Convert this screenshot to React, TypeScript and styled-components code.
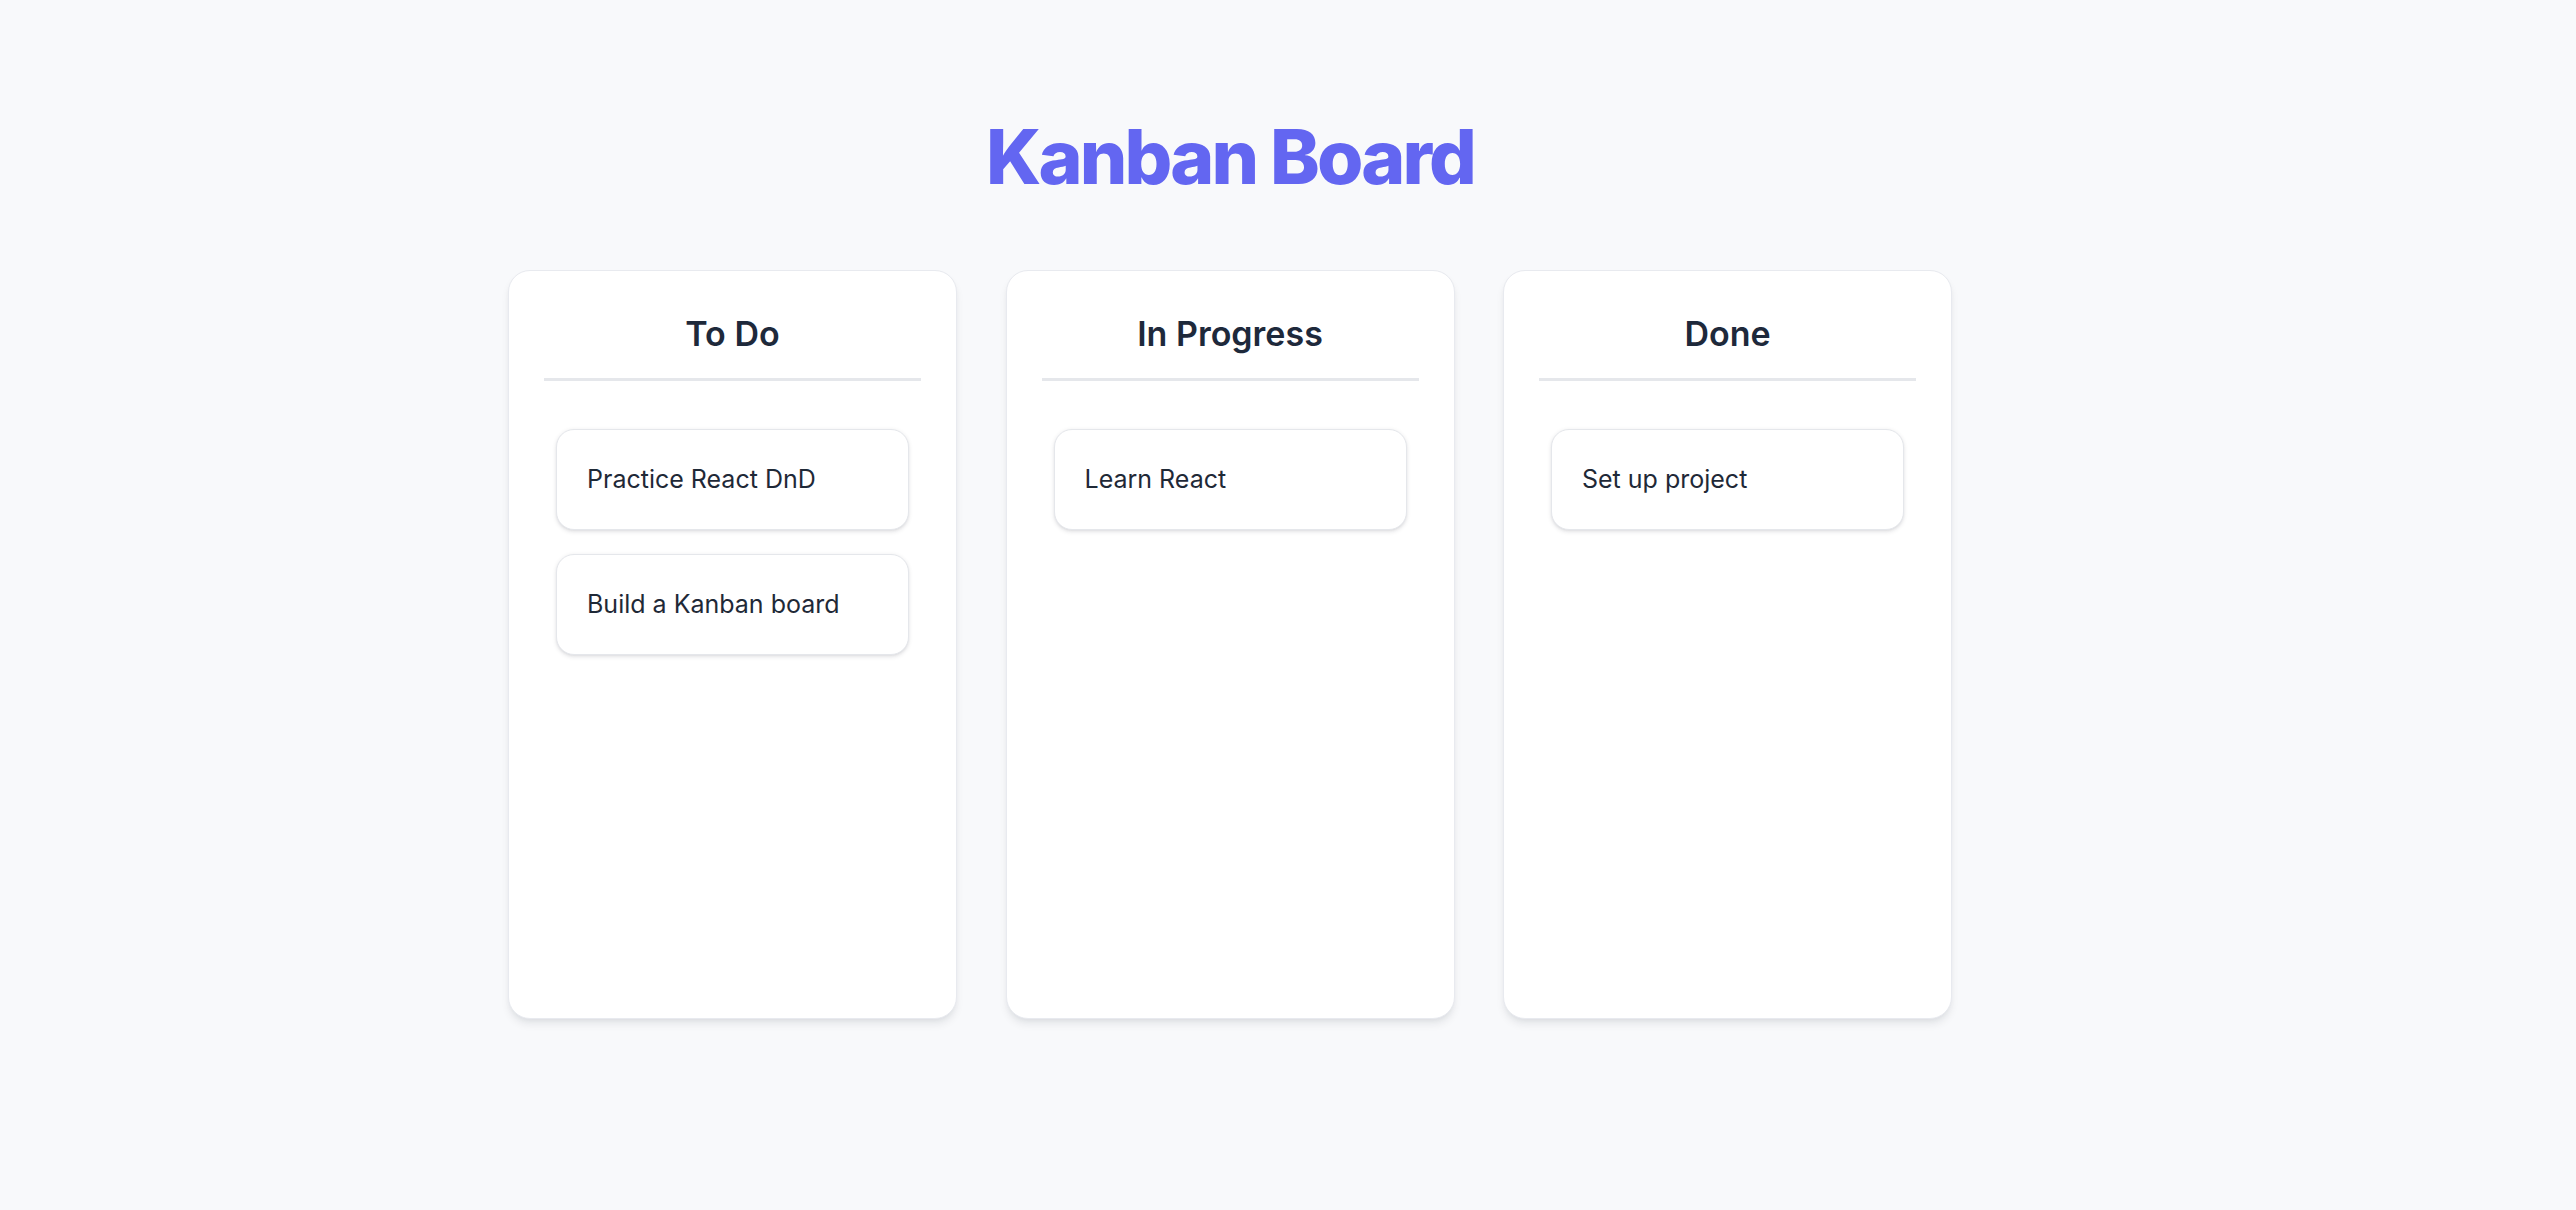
import React from 'react';
import styled, { createGlobalStyle } from 'styled-components';

type Task = { id: string; title: string };
type Column = { id: string; title: string; tasks: Task[] };

const columns: Column[] = [
  {
    id: 'todo',
    title: 'To Do',
    tasks: [
      { id: 't1', title: 'Practice React DnD' },
      { id: 't2', title: 'Build a Kanban board' },
    ],
  },
  {
    id: 'progress',
    title: 'In Progress',
    tasks: [{ id: 't3', title: 'Learn React' }],
  },
  {
    id: 'done',
    title: 'Done',
    tasks: [{ id: 't4', title: 'Set up project' }],
  },
];

const GlobalStyle = createGlobalStyle`
  * {
    box-sizing: border-box;
  }

  html,
  body {
    margin: 0;
    padding: 0;
    background-color: #f8f9fb;
    font-family: Inter, 'Noto Sans', 'Liberation Sans', sans-serif;
    -webkit-font-smoothing: antialiased;
  }
`;

export default function App() {
  return (
    <>
      <GlobalStyle />
      <Page>
        <Title>Kanban Board</Title>
        <Board>
          {columns.map((column) => (
            <ColumnBox key={column.id}>
              <ColumnTitle>{column.title}</ColumnTitle>
              <TaskList>
                {column.tasks.map((task) => (
                  <TaskCard key={task.id}>{task.title}</TaskCard>
                ))}
              </TaskList>
            </ColumnBox>
          ))}
        </Board>
      </Page>
    </>
  );
}

const Page = styled.div`
  min-height: 1210px;
  display: flex;
  flex-direction: column;
  align-items: center;
  padding: 112px 116px 0 0;
`;

const Title = styled.h1`
  margin: 0 0 68px;
  font-size: 75px;
  line-height: 90px;
  font-weight: 800;
  letter-spacing: -0.038em;
  color: #6366f1;
`;

const Board = styled.div`
  display: flex;
  gap: 48.5px;
`;

const ColumnBox = styled.section`
  width: 449px;
  height: 749px;
  display: flex;
  flex-direction: column;
  padding: 35px;
  background: #ffffff;
  border: 1.5px solid #e8eaef;
  border-radius: 22px;
  box-shadow: 0 6px 9px -1.5px rgba(15, 23, 42, 0.08),
    0 3px 6px -3px rgba(15, 23, 42, 0.08);
`;

const ColumnTitle = styled.h2`
  margin: 0 0 36px;
  padding-bottom: 16px;
  border-bottom: 3px solid #e5e7eb;
  text-align: center;
  font-size: 34px;
  line-height: 56px;
  font-weight: 600;
  color: #1e293b;
`;

const TaskList = styled.div`
  display: flex;
  flex-direction: column;
  gap: 24px;
  padding: 12px;
`;

const TaskCard = styled.div`
  padding: 30px;
  background: #ffffff;
  border: 1.5px solid #e5e7eb;
  border-radius: 18px;
  font-size: 25px;
  line-height: 39px;
  font-weight: 400;
  color: #1f2937;
  box-shadow: 0 1.5px 4.5px rgba(15, 23, 42, 0.1),
    0 1.5px 3px -1.5px rgba(15, 23, 42, 0.1);
`;
